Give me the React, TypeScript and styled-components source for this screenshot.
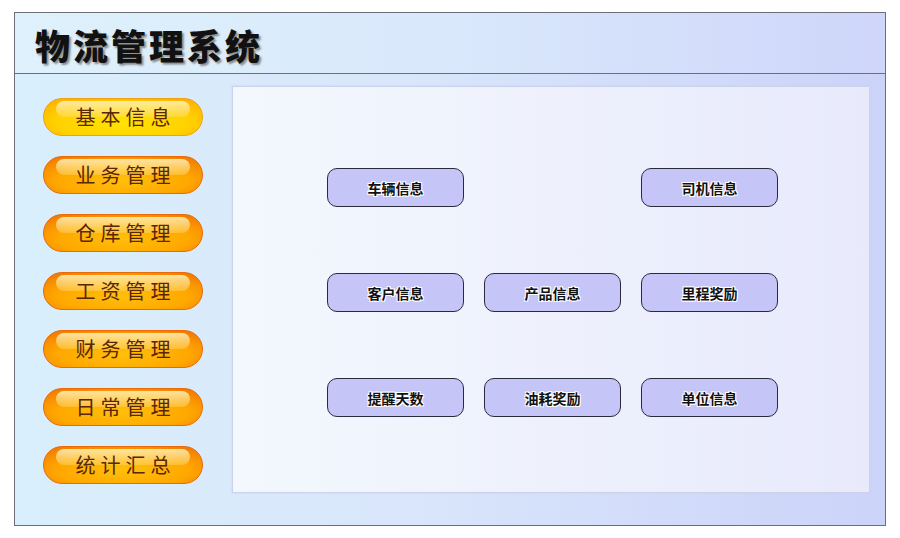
import React, {FC} from 'react';
import styled, {createGlobalStyle} from "styled-components";

const GlobalStyle = createGlobalStyle`
  html, body {
    margin: 0;
    padding: 0;
    background: #ffffff;
    font-family: "Noto Sans CJK SC", "Liberation Sans", sans-serif;
  }
`

const menuItems: string[] = ['基本信息', '业务管理', '仓库管理', '工资管理', '财务管理', '日常管理', '统计汇总']

const panelItems: (string | null)[] = [
    '车辆信息', null, '司机信息',
    '客户信息', '产品信息', '里程奖励',
    '提醒天数', '油耗奖励', '单位信息',
]

const App: FC = () => {
    return (
        <Page>
            <GlobalStyle/>
            <Frame>
                <Header>
                    <Title>物流管理系统</Title>
                </Header>
                <Body>
                    <Sidebar>
                        {menuItems.map((item, i) => (
                            <MenuButton key={item} $active={i === 0}>
                                <span>{item}</span>
                            </MenuButton>
                        ))}
                    </Sidebar>
                    <Panel>
                        <ButtonGrid>
                            {panelItems.map((item, i) =>
                                item ? <PanelButton key={item}>{item}</PanelButton> : <div key={'empty' + i}/>
                            )}
                        </ButtonGrid>
                    </Panel>
                </Body>
            </Frame>
        </Page>
    );
};

const Page = styled.div`
  width: 900px;
  height: 538px;
  padding: 12px 0 0 14px;
  box-sizing: border-box;
`

const Frame = styled.div`
  width: 872px;
  height: 514px;
  box-sizing: border-box;
  border: 1px solid #6c6f78;
  display: flex;
  flex-direction: column;
`

const Header = styled.div`
  height: 61px;
  box-sizing: border-box;
  border-bottom: 1px solid #6c6f78;
  background: linear-gradient(90deg, #def1fc 0%, #d9e8fb 50%, #cfd6fa 100%);
  display: flex;
  align-items: center;
  padding-left: 20px;
`

const Title = styled.h1`
  margin: 0;
  font-family: "Noto Sans CJK SC", sans-serif;
  font-size: 35px;
  font-weight: 900;
  letter-spacing: 3px;
  color: #111;
  text-shadow: 2px 2px 2px #8a8a8a;
  line-height: 1;
  position: relative;
  top: 1px;
`

const Body = styled.div`
  flex: 1;
  display: flex;
  background: linear-gradient(90deg, #d9effc 0%, #d9e6fb 45%, #ccd3f9 100%);
`

const Sidebar = styled.div`
  width: 217px;
  padding: 24px 0 0 28px;
  box-sizing: border-box;
  display: flex;
  flex-direction: column;
  gap: 20px;
`

const MenuButton = styled.div<{ $active?: boolean }>`
  position: relative;
  width: 160px;
  height: 38px;
  box-sizing: border-box;
  border-radius: 19px;
  border: 1px solid ${p => p.$active ? '#f0a010' : '#e86a08'};
  background: ${p => p.$active
    ? 'radial-gradient(ellipse 75% 85% at 50% 65%, #ffe400 0%, #ffd200 55%, #ffaa00 100%)'
    : 'radial-gradient(ellipse 75% 85% at 50% 65%, #ffc00a 0%, #ffa800 55%, #f07000 100%)'};
  display: flex;
  align-items: center;
  justify-content: center;
  overflow: hidden;

  &::before {
    content: '';
    position: absolute;
    left: 12px;
    right: 12px;
    top: 2px;
    height: 16px;
    border-radius: 12px;
    background: linear-gradient(180deg, rgba(255, 244, 190, 0.85) 0%, rgba(255, 225, 130, 0.35) 100%);
  }

  span {
    position: relative;
    font-family: "Noto Sans CJK SC", sans-serif;
    font-size: 20px;
    letter-spacing: 5px;
    margin-right: -5px;
    color: #5a2606;
    line-height: 1;
  }
`

const Panel = styled.div`
  width: 638px;
  height: 407px;
  margin-top: 12px;
  box-sizing: border-box;
  border: 1px solid #ccd2ea;
  box-shadow: 0 0 2px rgba(200, 210, 240, 0.8);
  background: linear-gradient(90deg, #f3f8fe 0%, #eef1fc 50%, #e8eafc 100%);
`

const ButtonGrid = styled.div`
  display: grid;
  grid-template-columns: repeat(3, 137px);
  grid-auto-rows: 39px;
  column-gap: 20px;
  row-gap: 66px;
  padding: 81px 0 0 94px;
`

const PanelButton = styled.div`
  box-sizing: border-box;
  border: 1px solid #2a2a3a;
  border-radius: 10px;
  background: #c5c5f8;
  display: flex;
  align-items: center;
  justify-content: center;
  font-family: "Noto Sans CJK SC", sans-serif;
  font-size: 14px;
  font-weight: 700;
  color: #111;
  text-shadow: 1px 1px 0 #fff, -1px -1px 0 #fff, 1px -1px 0 #fff, -1px 1px 0 #fff;
`

export default App;
